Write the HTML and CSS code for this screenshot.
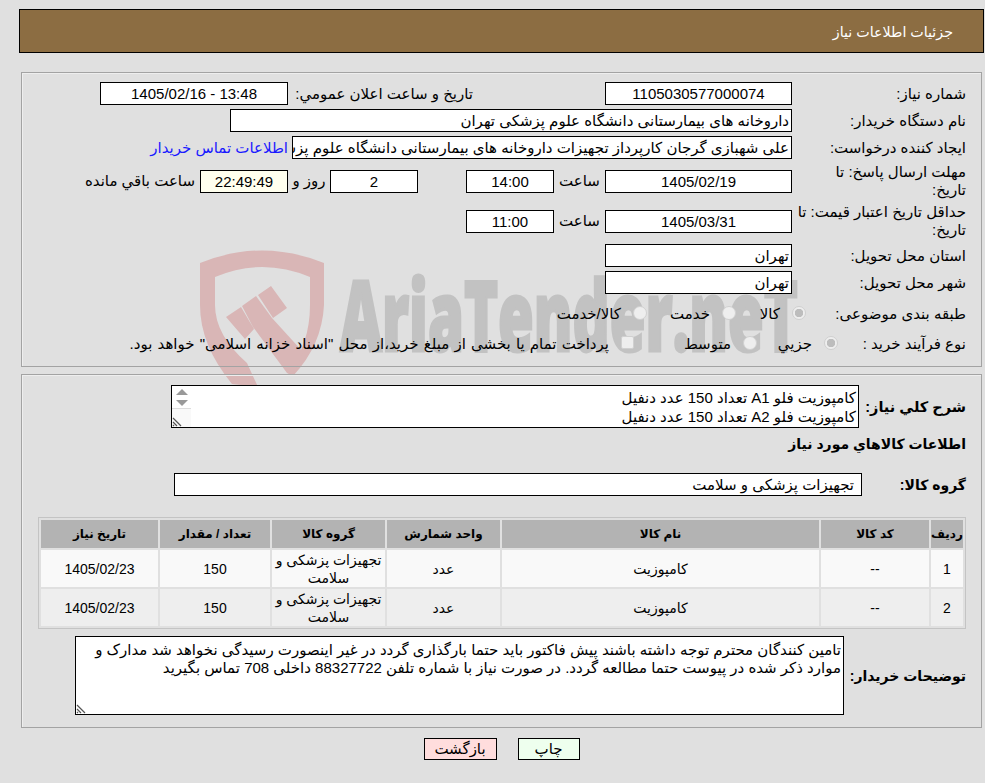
FILE: index.html
```html
<!DOCTYPE html>
<html lang="fa" dir="rtl">
<head>
<meta charset="utf-8">
<title>جزئیات اطلاعات نیاز</title>
<link rel="stylesheet" href="styles.css">
</head>
<body>
<svg class="watermark" viewBox="196 247 640 150" width="640" height="150" aria-hidden="true">
  <path class="wm-shield" d="M200 263 Q262 238 324 263 V305 Q322 345 293 376 L287 372 Q310 345 310 305 V277 Q262 257 215 277 V305 Q215 335 247 363 L258 387 L232 384 Q200 345 200 305 Z"/>
  <path class="wm-shield" d="M226 317 L241 307 L254 329 L245 339 Z M242 306 L256 296 L272 318 L303 352 L293 376 L287 373 L253 327 Z M258 295 L271 286 L287 308 L273 318 Z"/>
  <text class="wm-text" x="340" y="351" textLength="458" lengthAdjust="spacingAndGlyphs">AriaTender.neT</text>
</svg>
<header class="title-bar">جزئیات اطلاعات نیاز</header>
<main>
  <section class="panel panel-top">
    <div class="row">
      <span class="lbl">شماره نیاز:</span>
      <div class="field w187 center">1105030577000074</div>
      <span class="lbl-announce">تاریخ و ساعت اعلان عمومي:</span>
      <div class="field w188 center">13:48 - 1405/02/16</div>
    </div>
    <div class="row">
      <span class="lbl">نام دستگاه خریدار:</span>
      <div class="field w562">داروخانه های بیمارستانی دانشگاه علوم پزشکی تهران</div>
    </div>
    <div class="row">
      <span class="lbl">ایجاد کننده درخواست:</span>
      <div class="field w500">علی شهبازی گرجان کارپرداز تجهیزات داروخانه های بیمارستانی دانشگاه علوم پزشکی تهران</div>
      <a class="link" href="#">اطلاعات تماس خریدار</a>
    </div>
    <div class="row tall">
      <span class="lbl">مهلت ارسال پاسخ: تا<br>تاریخ:</span>
      <div class="field w187 center">1405/02/19</div>
      <span class="lbl-hour">ساعت</span>
      <div class="field w88 center">14:00</div>
      <div class="field w88 center gap-days">2</div>
      <span class="lbl-day">روز و</span>
      <div class="field w88 center remain">22:49:49</div>
      <span class="lbl-left">ساعت باقي مانده</span>
    </div>
    <div class="row tall tall-last">
      <span class="lbl">حداقل تاریخ اعتبار قیمت: تا<br>تاریخ:</span>
      <div class="field w187 center">1405/03/31</div>
      <span class="lbl-hour">ساعت</span>
      <div class="field w88 center">11:00</div>
    </div>
    <div class="row">
      <span class="lbl">استان محل تحویل:</span>
      <div class="field w187">تهران</div>
    </div>
    <div class="row">
      <span class="lbl">شهر محل تحویل:</span>
      <div class="field w187">تهران</div>
    </div>
    <div class="row choice choice-a">
      <span class="lbl lbl-a">طبقه بندی موضوعی:</span>
      <span class="radio on"></span><span class="opt o-kala">کالا</span>
      <span class="radio"></span><span class="opt o-khed">خدمت</span>
      <span class="radio"></span><span class="opt">کالا/خدمت</span>
    </div>
    <div class="row choice choice-b">
      <span class="lbl lbl-b-type">نوع فرآیند خرید :</span>
      <span class="radio on"></span><span class="opt o-jozi">جزيي</span>
      <span class="radio"></span><span class="opt o-mot">متوسط</span>
      <span class="check"></span><span class="opt o-long">پرداخت تمام یا بخشی از مبلغ خرید،از محل "اسناد خزانه اسلامی" خواهد بود.</span>
    </div>
  </section>

  <section class="panel panel-bottom">
    <div class="row row-desc">
      <span class="lbl-b lbl-desc">شرح کلي نیاز:</span>
      <div class="area area-desc">
        <div class="area-text">کامپوزیت فلو A1 تعداد 150 عدد دنفیل<br>کامپوزیت فلو A2 تعداد 150 عدد دنفیل</div>
        <div class="scroll">
          <span class="arrow up"></span>
          <span class="arrow down"></span>
        </div>
        <svg class="grip" viewBox="0 0 10 10" width="10" height="10" aria-hidden="true"><path d="M1 1 L9 9 M1 5 L5 9 M1 8 L2 9"/></svg>
      </div>
    </div>
    <h2 class="goods-title">اطلاعات کالاهاي مورد نیاز</h2>
    <div class="row row-group">
      <span class="lbl-b lbl-group">گروه کالا:</span>
      <div class="field w688">تجهیزات پزشکی و سلامت</div>
    </div>
    <div class="table-wrap">
      <table>
        <thead>
          <tr><th class="c1">ردیف</th><th class="c2">کد کالا</th><th class="c3">نام کالا</th><th class="c4">واحد شمارش</th><th class="c5">گروه کالا</th><th class="c6">تعداد / مقدار</th><th class="c7">تاریخ نیاز</th></tr>
        </thead>
        <tbody>
          <tr><td>1</td><td>--</td><td>کامپوزیت</td><td>عدد</td><td>تجهیزات پزشکی و سلامت</td><td>150</td><td>1405/02/23</td></tr>
          <tr><td>2</td><td>--</td><td>کامپوزیت</td><td>عدد</td><td>تجهیزات پزشکی و سلامت</td><td>150</td><td>1405/02/23</td></tr>
        </tbody>
      </table>
    </div>
    <div class="row row-notes">
      <span class="lbl-b lbl-notes">توضیحات خریدار:</span>
      <div class="area area-notes">
        <div class="area-text">تامین کنندگان محترم توجه داشته باشند پیش فاکتور باید حتما بارگذاری گردد در غیر اینصورت رسیدگی نخواهد شد مدارک و موارد ذکر شده در پیوست حتما مطالعه گردد. در صورت نیاز با شماره تلفن 88327722 داخلی 708 تماس بگیرید</div>
        <svg class="grip" viewBox="0 0 10 10" width="10" height="10" aria-hidden="true"><path d="M1 1 L9 9 M1 5 L5 9 M1 8 L2 9"/></svg>
      </div>
    </div>
  </section>

  <div class="actions">
    <button class="btn print" type="button">چاپ</button>
    <button class="btn back" type="button">بازگشت</button>
  </div>
</main>
</body>
</html>
```
FILE: styles.css
```css
* { box-sizing: border-box; }
html, body { margin: 0; padding: 0; }
body {
  position: relative;
  width: 985px;
  height: 783px;
  overflow: hidden;
  background: #e0e0e0;
  color: #000;
  font: 15px/18px "Liberation Sans", "DejaVu Sans", sans-serif;
}
.watermark { position: absolute; left: 196px; top: 247px; z-index: 0; direction: ltr; }
.wm-shield { fill: #d9b6b6; }
.wm-text { fill: #c2c2c2; stroke: #c2c2c2; stroke-width: 3px; font: 800 98px "Open Sans", sans-serif; direction: ltr; unicode-bidi: embed; }

.title-bar {
  position: relative;
  height: 44px;
  margin: 9px 1px 0 19px;
  padding: 13px 30px 0 0;
  background: #8c6d42;
  border: 1px solid #000;
  color: #fff;
  font-size: 14.25px;
}
main { position: relative; z-index: 1; }
.panel {
  margin-left: 21px;
  margin-right: 3px;
  border: 1px solid #a3a3a3;
  box-shadow: inset 0 1px 0 #eee, inset 1px 0 0 #eee;
  padding-right: 15px;
}
.panel-top { margin-top: 19px; height: 295px; padding-top: 9px; }
.panel-bottom { margin-top: 7px; height: 354px; padding-top: 10px; }

.row { display: flex; align-items: center; height: 23px; margin-bottom: 4px; }
.row.tall { height: 36px; }
.row.tall-last { margin-bottom: 5px; }
.lbl { width: 174px; flex: none; }
.field {
  flex: none;
  height: 23px;
  padding: 1px 2px 0;
  background: #fff;
  border: 1px solid #000;
  white-space: nowrap;
  overflow: hidden;
  line-height: 20px;
}
.center { text-align: center; }
.w187 { width: 187px; }
.w188 { width: 188px; }
.w88 { width: 88px; }
.w562 { width: 562px; }
.w500 { width: 500px; }
.w688 { width: 688px; padding-right: 7px; }
.remain { background: #ffffee; }
.lbl-announce { width: 317px; padding-right: 132px; flex: none; white-space: nowrap; }
.link { margin-right: 4px; color: #1a1aff; text-decoration: none; white-space: nowrap; }
.lbl-hour { width: 51px; flex: none; text-align: center; }
.gap-days { margin-right: 48px; }
.lbl-day { width: 42px; flex: none; text-align: center; }
.lbl-left { margin-right: 5px; white-space: nowrap; }

.choice { margin-bottom: 0; }
.choice-a { margin-top: 8px; }
.choice-b { margin-top: 7px; }
.lbl-a { width: 160px; }
.lbl-b-type { width: 128px; }
.radio {
  flex: none;
  width: 14px;
  height: 14px;
  margin-bottom: 2px;
  border-radius: 50%;
  background: #eee;
  border: 1px solid #d0d0d0;
}
.radio.on { background: radial-gradient(circle, #bdbdbd 0 4px, #eee 4.5px); }
.check {
  flex: none;
  width: 13px;
  height: 13px;
  margin-bottom: 2px;
  background: #eee;
  border: 1px solid #d0d0d0;
  border-radius: 2px;
}
.opt { flex: none; margin-right: 12px; white-space: nowrap; }
.o-kala { width: 44px; }
.o-khed { width: 63px; }
.o-jozi { width: 55px; }
.o-mot { width: 97px; }
.o-long { word-spacing: 1px; }

.lbl-b { font-weight: 700; font-size: 14px; flex: none; }
.row-desc { height: 43px; margin-bottom: 0; }
.lbl-desc { width: 107px; font-size: 14.5px; }
.area { position: relative; flex: none; background: #fff; border: 1px solid #000; }
.area-desc { width: 688px; height: 43px; }
.area-notes { width: 769px; height: 79px; }
.area-text { padding: 2px; line-height: 19px; }
.area-notes .area-text { padding-top: 4px; line-height: 18px; }
.scroll {
  position: absolute;
  left: 0;
  top: 0;
  width: 19px;
  height: 41px;
  background: linear-gradient(#fff 0 22px, #ddd 22px 23px, #f9f9f9 23px);
}
.arrow { position: absolute; left: 4px; width: 0; height: 0; border-left: 6px solid transparent; border-right: 6px solid transparent; }
.arrow.up { top: 3px; border-bottom: 6px solid #999; }
.arrow.down { top: 14px; border-top: 6px solid #999; }
.grip { position: absolute; left: 0; bottom: 0; }
.grip path { stroke: #555; stroke-width: 1.2; fill: none; }

.goods-title { margin: 6px 0 0; height: 20px; font-size: 14px; font-weight: 700; line-height: 20px; }
.row-group { margin-top: 19px; margin-bottom: 0; }
.lbl-group { width: 104px; }

.table-wrap { margin: 21px 0 0 0; }
table {
  width: 928px;
  table-layout: fixed;
  border-collapse: separate;
  border-spacing: 2px;
  border: 1px solid #c4c4c4;
  background: #e0e0e0;
}
th { height: 28px; padding: 0; background: #b3b3b3; font-size: 12px; font-weight: 700; }
td { height: 37px; padding: 0; text-align: center; font-size: 14px; line-height: 18px; }
tbody tr:nth-child(1) td { background: #f9f9f9; }
tbody tr:nth-child(2) td { background: #eeeeee; }
.c1 { width: 32px; } .c2 { width: 108px; } .c3 { width: 317px; } .c4 { width: 113px; }
.c5 { width: 113px; } .c6 { width: 110px; } .c7 { width: 117px; }

.row-notes { height: 79px; margin: 7px 0 0; }
.lbl-notes { width: 122px; }

.actions { display: flex; justify-content: center; gap: 21px; margin-top: 10px; padding-left: 18px; }
.btn { height: 22px; padding: 0; border: 1px solid #000; color: #000; font: inherit; line-height: 18px; }
.print { width: 62px; background: #eeffee; }
.back { width: 73px; background: #ffdddd; }
```
